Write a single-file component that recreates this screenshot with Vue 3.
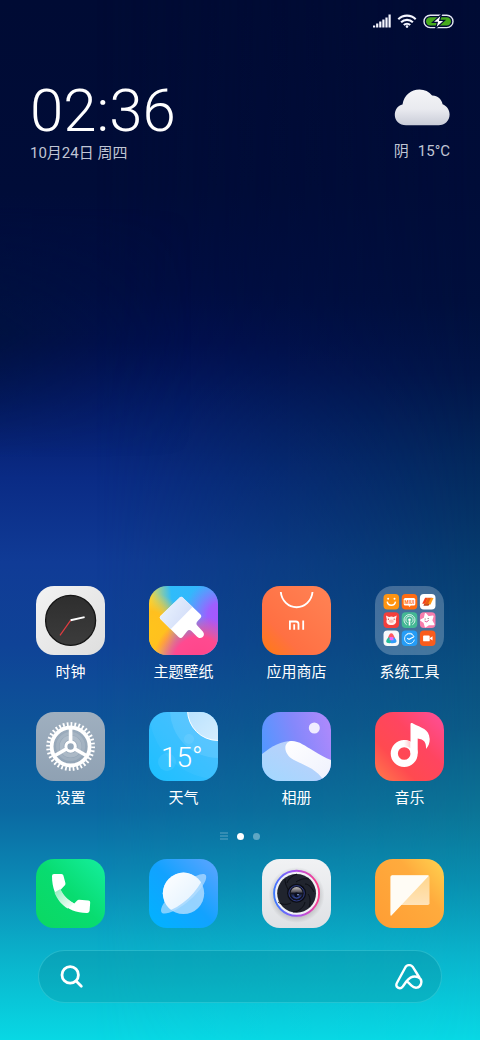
<script setup>
const apps = [
  { id: 'clock', name: '时钟' },
  { id: 'themes', name: '主题壁纸' },
  { id: 'store', name: '应用商店' },
  { id: 'tools', name: '系统工具' },
  { id: 'settings', name: '设置' },
  { id: 'weather', name: '天气' },
  { id: 'gallery', name: '相册' },
  { id: 'music', name: '音乐' },
]
const signalBars = [2, 4, 6, 8, 10, 13]
</script>

<template>
  <main class="home">
    <header class="status">
      <svg class="signal" viewBox="0 0 18 14" role="img" aria-label="信号">
        <rect v-for="(h, i) in signalBars" :key="i" :x="i * 3.1" :y="13.5 - h" width="2.2" :height="h" fill="#f4f6ff" />
      </svg>
      <svg class="wifi" viewBox="0 0 20 14" role="img" aria-label="WLAN">
        <g fill="none" stroke="#f4f6ff" stroke-width="2.1">
          <path d="M1.3 5.2a12.4 12.4 0 0 1 17.4 0" />
          <path d="M4.1 8.3a8.4 8.4 0 0 1 11.8 0" />
          <path d="M6.8 11.1a4.6 4.6 0 0 1 6.4 0" />
        </g>
        <circle cx="10" cy="12.6" r="1.3" fill="#f4f6ff" />
      </svg>
      <svg class="battery" viewBox="0 0 31 15" role="img" aria-label="正在充电">
        <rect x="1" y="1.2" width="29" height="12.4" rx="6.2" fill="none" stroke="#e4e8f4" stroke-width="1.4" />
        <rect x="3" y="3.2" width="25" height="8.4" rx="4.2" fill="#46ab1c" />
        <path d="M18.500 0.400 9.600 8.300h4.700L12.600 14.600l9-8.200h-4.900z" fill="#fff" stroke="#000c35" stroke-width="1.2" />
      </svg>
    </header>

    <section class="widget">
      <div class="now">
        <time class="time">02:36</time>
        <span class="date">10月24日 周四</span>
      </div>
      <div class="sky">
        <svg class="cloud" viewBox="0 0 56 37" aria-hidden="true">
          <defs>
            <linearGradient id="cl" x1="0" y1="0" x2="0" y2="1">
              <stop offset="0" stop-color="#f4f4f7" />
              <stop offset=".55" stop-color="#e9eaef" />
              <stop offset="1" stop-color="#c9ccd8" />
            </linearGradient>
          </defs>
          <path d="M12 36.300C5.400 36.300.8 31.500.8 26c0-5.500 3.200-9.600 7.700-10.600C10.200 6.200 17 .6 25.500.6c5.200 0 9.600 2.200 12.600 6 5.400-.2 9.400 3.400 10.500 8.600 4.300 1.700 7 5.700 7 10.300 0 6-4.700 10.800-11 10.800z" fill="url(#cl)" />
        </svg>
        <span class="temp"><span>阴</span><span class="deg">15°C</span></span>
      </div>
    </section>

    <nav class="grid">
      <button v-for="app in apps" :key="app.id" class="app" type="button">
        <svg class="icon" viewBox="0 0 69 69" aria-hidden="true">
          <template v-if="app.id === 'clock'">
            <defs>
              <linearGradient id="ck" x1="0" y1="0" x2="1" y2="1"><stop offset="0" stop-color="#f3f3f3" /><stop offset="1" stop-color="#dedede" /></linearGradient>
              <linearGradient id="ckf" x1="0" y1="0" x2="0" y2="1"><stop offset="0" stop-color="#2e2e2e" /><stop offset="1" stop-color="#3c3c3c" /></linearGradient>
            </defs>
            <rect width="69" height="69" fill="url(#ck)" />
            <circle cx="34.6" cy="34.4" r="25" fill="url(#ckf)" stroke="#151515" stroke-width="1.3" />
            <path d="m34.600 34.400-10.600 15" stroke="#e23c40" stroke-width="1.2" />
            <path d="m34.600 34.300 14-3.200" stroke="#fff" stroke-width="1.9" />
          </template>

          <template v-else-if="app.id === 'themes'">
            <defs>
              <linearGradient id="th1" x1="0" y1=".1" x2="1" y2="0"><stop offset="0" stop-color="#ffd530" /><stop offset=".1" stop-color="#b8d27c" /><stop offset=".32" stop-color="#2fbcfa" /><stop offset="1" stop-color="#36b2ff" /></linearGradient>
              <radialGradient id="th2" gradientUnits="userSpaceOnUse" cx="72" cy="30" r="38"><stop offset="0" stop-color="#a955ff" /><stop offset=".35" stop-color="#a955ff" stop-opacity=".9" /><stop offset="1" stop-color="#a06cff" stop-opacity="0" /></radialGradient>
              <radialGradient id="th3" gradientUnits="userSpaceOnUse" cx="0" cy="44" r="38"><stop offset="0" stop-color="#ffc41c" /><stop offset=".5" stop-color="#ffc01f" /><stop offset="1" stop-color="#ffcf30" stop-opacity="0" /></radialGradient>
              <radialGradient id="th4" gradientUnits="userSpaceOnUse" cx="50" cy="76" r="46"><stop offset="0" stop-color="#ff4488" /><stop offset=".55" stop-color="#ff4a90" /><stop offset="1" stop-color="#ff4a90" stop-opacity="0" /></radialGradient>
              <linearGradient id="th5" x1="0" y1="0" x2="1" y2=".6"><stop offset="0" stop-color="#ecf6ff" /><stop offset="1" stop-color="#d2dcf8" /></linearGradient>
            </defs>
            <rect width="69" height="69" fill="url(#th1)" />
            <rect width="69" height="69" fill="url(#th3)" />
            <rect width="69" height="69" fill="url(#th2)" />
            <rect width="69" height="69" fill="url(#th4)" />
            <path d="M30.700 11.400a2.200 2.200 0 0 1 3 0l17.600 16.800c1.300 1.200 1.300 2.600.2 3.800l-3 3.200c-1.500 1.700-1.400 3 0 4.500l5.300 5.800c3.500 4.100-2 8.900-5.700 5.200l-5.700-5.600c-1.500-1.400-3-1.300-4.300.1l-4.300 5.500c-1.200 1.600-2.900 1.600-4.200.2L11.400 32.900a2.200 2.200 0 0 1 0-3z" fill="#fff" />
            <path d="M30.700 11.400a2.200 2.200 0 0 1 3 0L43.500 21 21.600 43.200 11.400 32.900a2.200 2.200 0 0 1 0-3z" fill="url(#th5)" />
          </template>

          <template v-else-if="app.id === 'store'">
            <defs><linearGradient id="st" x1="0" y1="1" x2="1" y2="0"><stop offset="0" stop-color="#ff7b10" /><stop offset=".3" stop-color="#ff7043" /><stop offset="1" stop-color="#ff8355" /></linearGradient></defs>
            <rect width="69" height="69" fill="url(#st)" />
            <path d="M18.800 6c.8 8.600 7.500 15.200 15.800 15.200S49.700 14.600 50.500 6" fill="none" stroke="#fff" stroke-width="1.900" />
            <g fill="none" stroke="#fff" stroke-width="1.800">
              <path d="M27.900 43.800v-8.300h6q2.600 0 2.600 2.600v5.700" />
              <path d="M32.200 38.200v5.600" />
              <path d="M41.200 34.600v9.200" />
            </g>
          </template>

          <template v-else-if="app.id === 'tools'">
            <rect width="69" height="69" fill="#fff" fill-opacity=".24" />
            <g transform="translate(8.500 8)">
              <rect width="15.600" height="15.600" rx="4" fill="#ff9411" />
              <circle cx="4.600" cy="4.700" r="1" fill="#fff" /><circle cx="11" cy="4.700" r="1" fill="#fff" />
              <path d="M3.700 7.700a4.200 4.200 0 0 0 8.300 0" fill="none" stroke="#fff" stroke-width="1.500" />
            </g>
            <g transform="translate(26.700 8)">
              <rect width="15.600" height="15.600" rx="4" fill="#ff6c12" />
              <rect x="2" y="4" width="11.600" height="7.600" rx="1.600" fill="#fff" /><path d="m6.500 11.300 1.300 1.700 1.400-1.700z" fill="#fff" />
              <text x="7.800" y="9.600" text-anchor="middle" font-size="4.600" font-weight="700" fill="#ff6c12">MIUI</text>
            </g>
            <g transform="translate(44.900 8)">
              <rect width="15.600" height="15.600" rx="4" fill="#fff" />
              <path d="M5.200 3.800h7.200l-2.700 6H2.300z" fill="#f3401f" /><path d="M7.700 4h5.900l-3 6.500H4.800z" fill="#ff9a13" /><path d="M4.400 9.800h5.200l-1 2H3.500z" fill="#b8431c" /><path d="m8 4-3.100 6.500h3L11 4z" fill="#e95a15" />
            </g>
            <g transform="translate(8.500 26.300)">
              <rect width="15.600" height="15.600" rx="4" fill="#f33f3c" />
              <path d="M2.400 3.300 5.500 4.600a8 8 0 0 1 4.600 0l3.100-1.300-.9 3.900c1.200 3.600-.9 5.500-4.500 5.500s-5.700-1.900-4.500-5.500z" fill="#fff0ee" />
              <ellipse cx="7.800" cy="9" rx="2.600" ry="1.800" fill="#ffb8b0" /><circle cx="4.900" cy="6.900" r=".6" fill="#c6302d" /><circle cx="10.700" cy="6.900" r=".6" fill="#c6302d" />
            </g>
            <g transform="translate(26.700 26.300)">
              <rect width="15.600" height="15.600" rx="4" fill="#43b894" />
              <g fill="none" stroke="#fff" stroke-width=".8"><path d="M5 12.500a5.500 5.500 0 1 1 5.600 0" /><path d="M5.700 10.400a3.600 3.600 0 1 1 4.200 0" /></g>
              <circle cx="7.800" cy="7.500" r="1.300" fill="#fff" /><path d="M7 9h1.600v4.200H7z" fill="#fff" />
            </g>
            <g transform="translate(44.900 26.300)">
              <rect width="15.600" height="15.600" rx="4" fill="#f77dac" />
              <path d="m5.600 1.500 2.800 3.200 4.500-.8-1.300 4.300 2.200 3.900-4.500-.2-3.700 2.400L4.300 10 1 7.800l3.700-1.900z" fill="#fff" stroke="#fff" stroke-width="1.600" stroke-linejoin="round" />
              <path d="M4.700 8.700q2.200 2.100 4.200-.8" fill="none" stroke="#d7438a" stroke-width=".9" /><circle cx="5.200" cy="6.800" r=".5" fill="#533" /><circle cx="8.200" cy="6.100" r=".5" fill="#533" />
            </g>
            <g transform="translate(8.500 44.500)">
              <rect width="15.600" height="15.600" rx="4" fill="#f8f8fa" />
              <path d="M7.800 2.700c1.600 0 2.200 1.500 3.700 5.100H4.300c1.300-3.600 1.900-5.100 3.500-5.100z" fill="#ff5a62" />
              <path d="M4.500 7.200c2-.6 4 1.800 3.400 5.400-3.300.5-5.300-.2-5.200-1.800.1-1.200.9-2.300 1.800-3.600z" fill="#24bd99" /><path d="M11.200 7.200c-2-.4-4.200 1.500-4.500 5.300 4.200.6 6.400-.2 6.300-1.800-.1-1.200-.9-2.300-1.800-3.500z" fill="#319cf8" />
              <path d="M6.200 6.500h3.500l.4 3.300H6z" fill="#e36aff" />
            </g>
            <g transform="translate(26.700 44.500)">
              <rect width="15.600" height="15.600" rx="4" fill="#259cf6" />
              <path d="M12.500 6.500a5 5 0 1 0 .2 2.700M11 3.900A5 5 0 0 0 3.600 5" fill="none" stroke="#d5efff" stroke-width="1" /><path d="m5.500 7.700 1.900 1.200 4.800-2.600" fill="none" stroke="#fff" stroke-width="1.200" />
            </g>
            <g transform="translate(44.900 44.500)">
              <rect width="15.600" height="15.600" rx="4" fill="#fa5c1c" />
              <rect x="3.200" y="5" width="6.600" height="5.800" rx=".9" fill="#fff" /><path d="m10.100 7.600 2.500-1.900v4.400l-2.500-1.800z" fill="#fff" />
            </g>
          </template>

          <template v-else-if="app.id === 'settings'">
            <defs><linearGradient id="se" x1="0" y1="0" x2="0" y2="1"><stop offset="0" stop-color="#9fafbf" /><stop offset="1" stop-color="#8fa1b3" /></linearGradient></defs>
            <rect width="69" height="69" fill="url(#se)" />
            <g fill="none" stroke="#fff">
              <circle cx="34.600" cy="34.500" r="13" stroke-opacity=".12" stroke-width="3" />
              <circle cx="34.600" cy="34.500" r="9" stroke-opacity=".22" stroke-width="4" />
              <circle cx="34.600" cy="34.500" r="19" stroke-width="3.800" />
              <circle cx="34.600" cy="34.500" r="22.500" stroke-width="3.800" pathLength="72" stroke-dasharray="0.900 1.100" />
              <circle cx="34.600" cy="34.500" r="4.700" stroke-width="3" />
              <path v-for="a in [0, 120, 240]" :key="a" :transform="`rotate(${a} 34.600 34.500)`" d="M34.600 30V17" stroke-width="3.600" />
            </g>
          </template>

          <template v-else-if="app.id === 'weather'">
            <defs>
              <linearGradient id="we" x1="1" y1="0" x2="0" y2="1"><stop offset="0" stop-color="#4cbcff" /><stop offset="1" stop-color="#1cc0ff" /></linearGradient>
              <linearGradient id="wes" x1="0" y1="0" x2="1" y2="1"><stop offset="0" stop-color="#abdcfd" /><stop offset="1" stop-color="#e2f3ff" /></linearGradient>
            </defs>
            <rect width="69" height="69" fill="url(#we)" />
            <circle cx="69" cy="-2" r="69" fill="#fff" fill-opacity=".04" />
            <circle cx="69" cy="-2" r="48" fill="#fff" fill-opacity=".1" />
            <circle cx="40" cy="27" r="5" fill="#fff" fill-opacity=".08" />
            <circle cx="18" cy="50" r="9" fill="#fff" fill-opacity=".07" />
            <circle cx="69" cy="-2" r="30.500" fill="url(#wes)" stroke="#fff" stroke-width="1" />
            <text class="w-temp" x="12" y="55">15°</text>
          </template>

          <template v-else-if="app.id === 'gallery'">
            <defs>
              <linearGradient id="ga" x1="0" y1=".5" x2="1" y2=".2"><stop offset="0" stop-color="#5297ff" /><stop offset=".5" stop-color="#8488fb" /><stop offset="1" stop-color="#ae89fc" /></linearGradient>
              <linearGradient id="gb" x1="0" y1="1" x2="1" y2="0"><stop offset="0" stop-color="#a2d8ff" /><stop offset="1" stop-color="#c4cdf9" /></linearGradient>
              <linearGradient id="gc" x1="0" y1="0" x2="1" y2="1"><stop offset="0" stop-color="#fff" /><stop offset="1" stop-color="#eef1fd" /></linearGradient>
            </defs>
            <rect width="69" height="69" fill="url(#ga)" />
            <circle cx="52.300" cy="16" r="5.500" fill="#f0ecff" />
            <path d="M0 42c10-8 20-13 29-13 10 2 30 22 40 40H0z" fill="url(#gb)" />
            <path d="M29 29c8-.4 14 5 22 9.500 7 4 12 7.500 18 9.500v21h-7C54 56 42 53.500 32 48c-11-6-11-17.500-3-19z" fill="url(#gc)" />
          </template>

          <template v-else>
            <defs>
              <linearGradient id="mu" x1="0" y1="1" x2="1" y2="0"><stop offset="0" stop-color="#ff7c4c" /><stop offset=".3" stop-color="#ff4a50" /><stop offset=".6" stop-color="#ff4560" /><stop offset="1" stop-color="#ff4f9b" /></linearGradient>
              <linearGradient id="mun" gradientUnits="userSpaceOnUse" x1="29" y1="0" x2="36" y2="0"><stop offset="0" stop-color="#fff" /><stop offset="1" stop-color="#ffc3c9" /></linearGradient>
            </defs>
            <rect width="69" height="69" fill="url(#mu)" />
            <circle cx="29.200" cy="41.500" r="9.900" fill="none" stroke="#fff" stroke-width="7.200" />
            <path d="M28 28.100c3 0 5.300.5 7.500 1.700v6.400c-2-1.500-4.500-2.200-7.500-1.400z" fill="url(#mun)" />
            <path d="M35.500 12.400c0-1.300 1.100-1.700 2.100-1.100C46.500 16.300 54 16.500 54.700 27c.1 4-1.200 7.300-3.700 10 .5-6.500-2-9.700-8.300-10.500v15h-7.200z" fill="#fff" />
          </template>
        </svg>
        <span class="label">{{ app.name }}</span>
      </button>
    </nav>

    <div class="pager">
      <svg class="feed" viewBox="0 0 8 8" aria-hidden="true"><path d="M0 1h8M0 4h8M0 7h8" stroke="#fff" stroke-opacity=".35" stroke-width="1" /></svg>
      <i class="dot on"></i>
      <i class="dot"></i>
    </div>

    <nav class="dock">
      <button class="app" type="button" aria-label="电话">
        <svg class="icon" viewBox="0 0 69 69" aria-hidden="true">
          <defs>
            <linearGradient id="ph" x1="0" y1="1" x2="1" y2="0"><stop offset="0" stop-color="#0bd862" /><stop offset=".5" stop-color="#08dc70" /><stop offset="1" stop-color="#15ef9f" /></linearGradient>
            <linearGradient id="pt" x1="0" y1="0" x2="1" y2="1"><stop offset="0" stop-color="#8feebd" /><stop offset="1" stop-color="#fff" /></linearGradient>
          </defs>
          <rect width="69" height="69" fill="url(#ph)" />
          <path d="M18 15h7.500q1.600 0 1.900 1.500l2 7.600q.3 1.200-.5 2.200L24.400 31c3.100 6 7.200 10.200 13.800 13.400l3-3q.9-.8 2.100-.6l9 .8q2 .2 1.900 2l-.6 8.200q-.2 2-2.200 2.100C31.300 54.300 16 40.500 16 17q0-2 2-2z" fill="#fff" />
          <path d="M18.400 33.500 24.400 30c3.100 6.400 7.200 11 13.800 14.400l-6.400 5.100c-6-3.400-10.400-8.900-13.400-16z" fill="url(#pt)" />
        </svg>
      </button>
      <button class="app" type="button" aria-label="浏览器">
        <svg class="icon" viewBox="0 0 69 69" aria-hidden="true">
          <defs>
            <linearGradient id="br" x1="0" y1="1" x2="1" y2="0"><stop offset="0" stop-color="#00b4ff" /><stop offset=".5" stop-color="#12a2ff" /><stop offset="1" stop-color="#5fa4ff" /></linearGradient>
            <linearGradient id="bp" x1="0" y1="0" x2="1" y2="1"><stop offset="0" stop-color="#fff" /><stop offset="1" stop-color="#dcefff" /></linearGradient>
            <clipPath id="bc"><path d="M0 0h69L56 16C48 33 34 48 14 54L0 69z" /></clipPath>
          </defs>
          <rect width="69" height="69" fill="url(#br)" />
          <path d="M47 17c4-2 8.500-3 9.700-.9 3 5-7.500 18.500-18.500 27.200S15.500 57 12.600 53.400c-1.400-2 .1-6.400 3-10.400" fill="#cfe8ff" fill-opacity=".6" />
          <circle cx="34.500" cy="34.300" r="20.700" fill="#b6dfff" fill-opacity=".8" />
          <circle cx="34.500" cy="34.300" r="20.700" fill="url(#bp)" clip-path="url(#bc)" />
        </svg>
      </button>
      <button class="app" type="button" aria-label="相机">
        <svg class="icon" viewBox="0 0 69 69" aria-hidden="true">
          <defs>
            <linearGradient id="ca" x1="0" y1="0" x2="0" y2="1"><stop offset="0" stop-color="#f1f2f4" /><stop offset="1" stop-color="#dfe1e5" /></linearGradient>
            <linearGradient id="cr" x1="0" y1=".6" x2="1" y2=".5"><stop offset="0" stop-color="#3978ff" /><stop offset=".5" stop-color="#a856f5" /><stop offset="1" stop-color="#ff3c87" /></linearGradient>
            <radialGradient id="cs"><stop offset=".7" stop-color="#000" stop-opacity=".2" /><stop offset="1" stop-color="#000" stop-opacity="0" /></radialGradient>
            <linearGradient id="cn" x1="0" y1="0" x2="0" y2="1"><stop offset="0" stop-color="#c7c2c0" /><stop offset=".4" stop-color="#5a5860" /><stop offset=".55" stop-color="#11131f" /><stop offset="1" stop-color="#3c55b8" /></linearGradient>
          </defs>
          <rect width="69" height="69" fill="url(#ca)" />
          <circle cx="34.600" cy="36" r="28" fill="url(#cs)" />
          <circle cx="34.600" cy="34.300" r="22.500" fill="#f0f1f4" stroke="url(#cr)" stroke-width="1.900" />
          <circle cx="34.600" cy="34.300" r="19.400" fill="#20242e" />
          <g fill="none" stroke="#080a10" stroke-width=".8">
            <path d="M23 20c0 6 3 10 4 12M35 15c-6 2-9 6-10 9M47 20c-6-1-10 1-13 3M52 33c-2-4-5-8-9-8M47 48c2-5 1-11-1-13M16 43c4 3 9 3 13 1M31 53c6 0 11-5 12-10" />
          </g>
          <circle cx="34.600" cy="34.300" r="9.500" fill="#0a0c14" />
          <circle cx="34.600" cy="34.300" r="7.700" fill="#11131d" stroke="#3947a0" stroke-width=".8" />
          <circle cx="34.600" cy="33.800" r="5.900" fill="url(#cn)" />
          <circle cx="34.600" cy="36" r="2.400" fill="#0a0d1e" />
          <circle cx="36" cy="35.700" r=".8" fill="#9ebcff" />
        </svg>
      </button>
      <button class="app" type="button" aria-label="短信">
        <svg class="icon" viewBox="0 0 69 69" aria-hidden="true">
          <defs>
            <linearGradient id="ms" x1="0" y1=".8" x2="1" y2="0"><stop offset="0" stop-color="#ff9f35" /><stop offset=".6" stop-color="#ffab3d" /><stop offset="1" stop-color="#ffd350" /></linearGradient>
            <linearGradient id="mb" x1="0" y1="0" x2="0" y2="1"><stop offset="0" stop-color="#ffd58c" /><stop offset="1" stop-color="#ffe3b8" /></linearGradient>
          </defs>
          <rect width="69" height="69" fill="url(#ms)" />
          <path d="M17 16.300h35.700q1.800 0 1.800 1.800v26.100q0 1.800-1.800 1.800H25z" fill="url(#mb)" />
          <path d="M17.200 16.300h35.500q.7 0 1.200.4L16.700 56.200q-1.300 1.300-1.300-.6V18.100q0-1.800 1.800-1.800z" fill="#fffcf5" />
        </svg>
      </button>
    </nav>

    <form class="search" role="search" @submit.prevent>
      <button class="tool" type="submit" aria-label="搜索">
        <svg width="24" height="24" viewBox="0 0 24 24" aria-hidden="true">
          <g fill="none" stroke="#fff" stroke-width="2.800" stroke-linecap="round"><circle cx="10.200" cy="9.900" r="8.200" /><path d="m16.300 16.200 5 5" /></g>
        </svg>
      </button>
      <input class="query" type="text" aria-label="搜索" />
      <button class="tool" type="button" aria-label="小爱同学">
        <svg width="28" height="26" viewBox="0 0 28 26" aria-hidden="true">
          <path d="M10.700 2.800 2 18.800c-2.300 4.400 3 7.300 5.800 3.700l3.700-5.200c3.500-4.300 8-5.400 11.300-4.200 3.700 1.300 3.900 4.500 3.200 6.900-1.500 4.400-6.400 4.700-9.500 1.700l-3.600-3.600M24.400 13.500 17.600 2.700c-1.800-2.200-5.400-2.100-6.900.1" fill="none" stroke="#fff" stroke-width="2.400" stroke-linecap="round" stroke-linejoin="round" />
        </svg>
      </button>
    </form>
  </main>
</template>

<style>
html,
body {
  margin: 0;
  background: #08d8e4;
}
</style>

<style scoped>
.home {
  position: relative;
  isolation: isolate;
  box-sizing: border-box;
  min-height: 100vh;
  display: flex;
  flex-direction: column;
  padding: 12px 0 37px;
  overflow: hidden;
  color: #fff;
  font-family: Roboto, "Noto Sans CJK SC", sans-serif;
  background: linear-gradient(#000b34 0%, #000c38 18%, #010d44 28%, #020f52 33%, #051c6b 39%, #0a2b85 46%, #103b96 54%, #0f4397 62%, #0d5599 70%, #0b69a2 78%, #0b8bb6 85%, #0ab2cb 92%, #08d8e4 100%);
}
.home::before {
  content: "";
  position: absolute;
  inset: 0;
  z-index: -1;
  background: linear-gradient(#000b34 0%, #000c38 18%, #000f3c 29%, #011547 36%, #03295d 45%, #063c6f 54%, #094b7c 62%, #0b5a86 70%, #0b7496 78%, #0990b0 85%, #0ab4cc 92%, #08d8e4 100%);
  mask-image: linear-gradient(90deg, transparent 20%, #000 100%);
}
.home::after {
  content: "";
  position: absolute;
  inset: 0;
  z-index: -1;
  background: linear-gradient(transparent 20%, #001438 32%, transparent 44%);
  mask-image: linear-gradient(90deg, rgba(0, 0, 0, 0.6), transparent 40%);
}
.status {
  display: flex;
  justify-content: flex-end;
  align-items: center;
  gap: 6px;
  height: 18px;
  padding: 0 26px;
}
.signal { width: 18px; height: 14px; }
.wifi { width: 20px; height: 14px; }
.battery { width: 31px; height: 15px; }
.widget {
  display: flex;
  justify-content: space-between;
  padding: 48px 30px 0;
}
.now {
  display: flex;
  flex-direction: column;
}
.time {
  font-size: 60px;
  line-height: 66px;
  font-weight: 300;
}
.date,
.temp {
  font-size: 15px;
  line-height: 18px;
  color: #c0c5d4;
}
.sky {
  display: flex;
  flex-direction: column;
  align-items: flex-end;
  padding-top: 11px;
}
.cloud { width: 56px; height: 37px; }
.temp {
  display: flex;
  gap: 9px;
  margin-top: 16px;
}
.grid,
.dock {
  display: grid;
  grid-template-columns: repeat(4, 69px);
  justify-content: space-between;
  padding: 0 36px;
}
.grid {
  margin-top: auto;
  row-gap: 30px;
}
.app {
  display: flex;
  flex-direction: column;
  align-items: center;
  gap: 7px;
  padding: 0;
  border: 0;
  background: none;
  color: inherit;
  font: inherit;
}
.icon {
  display: block;
  width: 69px;
  height: 69px;
  border-radius: 18px;
}
.label {
  font-size: 15px;
  line-height: 20px;
  white-space: nowrap;
}
.w-temp {
  font-size: 28px;
  font-weight: 300;
  fill: #fff;
}
.pager {
  display: flex;
  justify-content: center;
  align-items: center;
  gap: 9px;
  margin: 24px 0 19px;
}
.feed { width: 8px; height: 8px; }
.dot {
  width: 7px;
  height: 7px;
  border-radius: 50%;
  background: rgba(255, 255, 255, 0.35);
}
.dot.on { background: #fff; }
.search {
  box-sizing: border-box;
  display: flex;
  align-items: center;
  height: 53px;
  margin: 22px 38px 0;
  padding: 0 18px 0 21px;
  border: 1px solid rgba(90, 225, 235, 0.35);
  border-radius: 27px;
  background: rgba(10, 120, 135, 0.24);
}
.tool {
  display: flex;
  padding: 0;
  border: 0;
  background: none;
}
.query {
  flex: 1;
  min-width: 0;
  border: 0;
  outline: 0;
  background: none;
  color: #fff;
  font: inherit;
  font-size: 15px;
}
</style>
